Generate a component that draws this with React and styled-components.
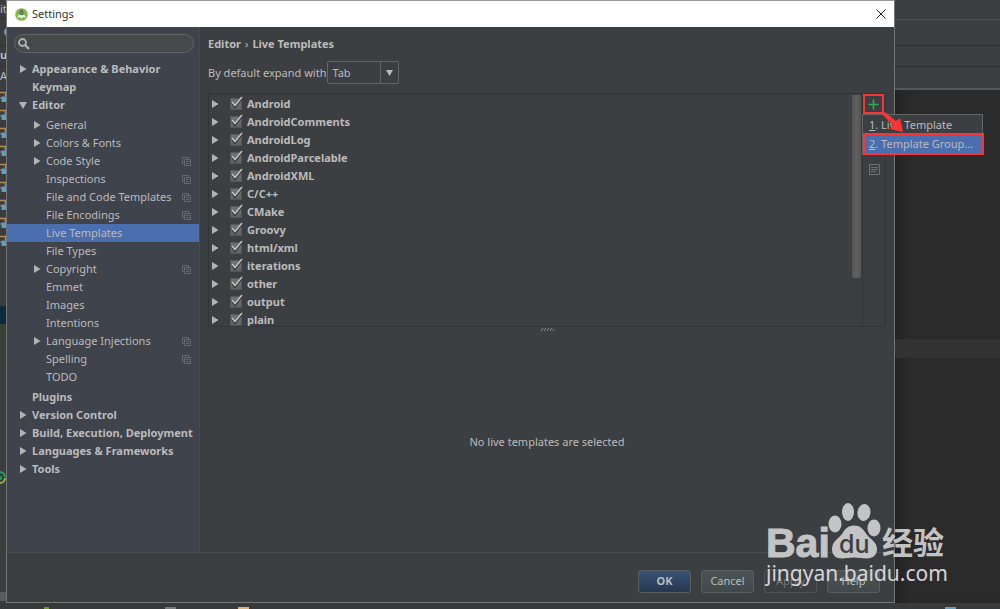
import React, { Component } from "react";
import styled, { createGlobalStyle } from "styled-components";

const GlobalStyle = createGlobalStyle`
  * {
    box-sizing: border-box;
  }

  body {
    margin: 0;
    background: #3c3f41;
    color: #bbbbbb;
    font-family: "Noto Sans", "Noto Sans CJK SC", sans-serif;
    font-size: 11px;
    line-height: 18px;
  }

  button, input, select {
    font: inherit;
    color: inherit;
  }
`;

const Screen = styled.div`
  position: relative;
  min-height: 100vh;
  display: flex;
  flex-direction: column;
  overflow: hidden;
`;

const Desktop = styled.div`
  flex: 1;
  display: flex;
`;

const ProjectStrip = styled.div`
  width: 6px;
  overflow: hidden;
  background: #3a3c3e;
  white-space: nowrap;
`;

const StripCell = styled.div`
  height: ${props => props.$height}px;
  background: ${props => props.$bg || "transparent"};
  border-bottom: ${props => (props.$line ? "1px solid #2f3133" : "none")};
  font-weight: ${props => (props.$bold ? "bold" : "normal")};

  > svg {
    display: block;
  }
`;

const EditorStrip = styled.div`
  width: 105px;
  background: #2b2b2b;
  box-shadow: inset 12px 0 12px -8px #1e1e1e;
`;

const EditorBar = styled.div`
  height: ${props => props.$height}px;
  background: #3c3f41;
  border-bottom: ${props => props.$line};
`;

const CaretRow = styled.div`
  height: 19px;
  margin-top: 249px;
  background: #323232;
`;

const StatusBar = styled.div`
  height: 6px;
  padding: 4px 44px 0;
  display: flex;
  overflow: hidden;
  background: #38393b;
`;

const StatusChip = styled.span`
  width: ${props => props.$width}px;
  height: 2px;
  margin-left: ${props => (props.$end ? "auto" : "0")};
  background: ${props => props.$color || "transparent"};
`;

const Dialog = styled.div`
  flex: 1;
  display: flex;
  flex-direction: column;
  border: 1px solid #747676;
  border-top-color: #999;
  background: #3c3f41;
`;

const TitleBar = styled.header`
  height: 26px;
  padding: 0 8px;
  display: flex;
  align-items: center;
  gap: 4px;
  background: #fff;
  color: #333;

  > span {
    flex: 1;
  }
`;

const IconButton = styled.button`
  padding: 0;
  border: 0;
  background: transparent;
  display: flex;
  justify-content: center;
  cursor: pointer;
`;

const Body = styled.div`
  flex: 1;
  display: flex;
  border-bottom: 1px solid #4b4d4e;
`;

const Sidebar = styled.nav`
  width: 193px;
  padding-top: 7px;
  background: #3f434c;
  border-right: 1px solid #484b4d;
`;

const SearchBox = styled.label`
  height: 19px;
  margin: 0 5px 7px 7px;
  padding: 0 3px;
  display: flex;
  align-items: center;
  gap: 4px;
  border: 1px solid #606464;
  border-radius: 10px;
  background: #45494a;

  > input {
    flex: 1;
    min-width: 0;
    height: 16px;
    padding: 0;
    border: 0;
    outline: 0;
    background: transparent;
  }
`;

const Tree = styled.ul`
  margin: 0;
  padding: 0;
  list-style: none;
`;

const SubTree = styled(Tree)`
  padding: 2px 0;
`;

const TreeRow = styled.button`
  width: 100%;
  height: 18px;
  padding: 0 8px 0 ${props => (props.$child ? "26px" : "12px")};
  display: flex;
  align-items: center;
  gap: 4px;
  border: 0;
  background: ${props => (props.$selected ? "#4b6eaf" : "transparent")};
  font-weight: ${props => (props.$child ? "normal" : "bold")};
  line-height: 18px;
  text-align: left;
  white-space: nowrap;
  cursor: pointer;

  > span {
    flex: 1;
  }
`;

const ArrowSlot = styled.i`
  flex: none;
  width: 9px;
  display: flex;
  justify-content: center;
`;

const Content = styled.main`
  flex: 1;
  min-width: 0;
  padding: 8px 8px 0;
  display: flex;
  flex-direction: column;
`;

const Breadcrumb = styled.h1`
  margin: 0;
  display: flex;
  gap: 4px;
  font-size: 11px;
  line-height: 18px;

  > i {
    font-style: normal;
    font-weight: normal;
  }
`;

const ExpandRow = styled.div`
  margin: 8px 0 9px;
  display: flex;
  align-items: center;
  gap: 1px;
`;

const SelectBox = styled.div`
  position: relative;

  > select {
    display: block;
    width: 72px;
    height: 23px;
    padding: 0 4px;
    border: 1px solid #646464;
    border-radius: 2px;
    background: transparent;
    appearance: none;
  }

  > svg {
    position: absolute;
    top: 0;
    right: 0;
    pointer-events: none;
  }
`;

const TemplatePanel = styled.section`
  height: 234px;
  display: flex;
  border: 1px solid #323435;
`;

const TemplateList = styled.ul`
  flex: 1;
  margin: 0;
  padding: 1px 0 0;
  overflow: hidden;
  list-style: none;
`;

const TemplateRow = styled.li`
  height: 18px;
  padding-left: 2px;
  display: flex;
  align-items: center;
  gap: 10px;
  font-weight: bold;
`;

const CheckLabel = styled.label`
  position: relative;
  display: flex;
  align-items: center;
  gap: 5px;

  > input {
    width: 12px;
    height: 12px;
    margin: 0;
    border: 1px solid #555;
    background: linear-gradient(#717171, #626262);
    appearance: none;
  }

  > svg {
    position: absolute;
    left: 0;
    top: 1px;
    visibility: hidden;
    pointer-events: none;
  }

  > input:checked + svg {
    visibility: visible;
  }
`;

const ScrollTrack = styled.div`
  width: 10px;
  padding-top: 1px;
`;

const ScrollThumb = styled.div`
  width: 9px;
  height: 183px;
  border-radius: 2px;
  background: linear-gradient(90deg, #555, #606060, #555);
`;

const Toolbar = styled.div`
  width: 23px;
  display: flex;
  flex-direction: column;
  gap: 50px;
  border-left: 1px solid #323435;
`;

const AddAction = styled.div`
  position: relative;
  height: 20px;
`;

const AddButton = styled(IconButton)`
  width: 21px;
  height: 20px;
  align-items: center;
  border: 2px solid #fa3434;
`;

const PopupMenu = styled.div`
  position: absolute;
  z-index: 1;
  top: 20px;
  left: -1px;
  width: 121px;
  padding: 1px 0 1px 2px;
  border: 1px solid #626566;
  background: #3c3f41;
`;

const MenuItem = styled.button`
  display: block;
  width: 100%;
  height: 18px;
  padding: 0 4px;
  border: 0;
  background: ${props => (props.$selected ? "#4b6eaf" : "transparent")};
  outline: ${props => (props.$selected ? "2px solid #fa3434" : "none")};
  line-height: 18px;
  text-align: left;
  white-space: nowrap;

  & + & {
    margin-top: 1px;
  }
`;

const Pointer = styled.svg`
  position: absolute;
  z-index: 2;
  top: 16px;
  left: 18px;
`;

const Splitter = styled.div`
  height: 5px;
  display: flex;
  justify-content: center;
`;

const EmptyState = styled.div`
  flex: 1;
  display: flex;
  align-items: center;
  justify-content: center;
`;

const Footer = styled.footer`
  height: 49px;
  padding: 7px 14px 0;
  display: flex;
  align-items: center;
  justify-content: flex-end;
  gap: 10px;
`;

const Button = styled.button`
  width: 53px;
  height: 23px;
  padding: 0;
  border: 1px solid ${props => (props.disabled ? "#505354" : "#5a5e60")};
  border-radius: 3px;
  background: linear-gradient(#4c5355, #42494b);
  line-height: 20px;

  &:disabled {
    background: transparent;
    color: #777;
  }
`;

const PrimaryButton = styled(Button)`
  background: linear-gradient(#365378, #263850);
  font-weight: bold;
`;

const Watermark = styled.svg`
  position: absolute;
  right: 52px;
  bottom: 15px;
  opacity: 0.92;
  pointer-events: none;
`;

const settings = [
  { name: "Appearance & Behavior", arrow: "right" },
  { name: "Keymap" },
  {
    name: "Editor",
    arrow: "down",
    children: [
      { name: "General", arrow: "right" },
      { name: "Colors & Fonts", arrow: "right" },
      { name: "Code Style", arrow: "right", project: true },
      { name: "Inspections", project: true },
      { name: "File and Code Templates", project: true },
      { name: "File Encodings", project: true },
      { name: "Live Templates" },
      { name: "File Types" },
      { name: "Copyright", arrow: "right", project: true },
      { name: "Emmet" },
      { name: "Images" },
      { name: "Intentions" },
      { name: "Language Injections", arrow: "right", project: true },
      { name: "Spelling", project: true },
      { name: "TODO" }
    ]
  },
  { name: "Plugins" },
  { name: "Version Control", arrow: "right" },
  { name: "Build, Execution, Deployment", arrow: "right" },
  { name: "Languages & Frameworks", arrow: "right" },
  { name: "Tools", arrow: "right" }
];

const groups = [
  "Android",
  "AndroidComments",
  "AndroidLog",
  "AndroidParcelable",
  "AndroidXML",
  "C/C++",
  "CMake",
  "Groovy",
  "html/xml",
  "iterations",
  "other",
  "output",
  "plain"
];

function Arrow({ down }) {
  return (
    <svg width="9" height="8" viewBox="0 0 9 8" fill="#b4b4b4">
      <path d={down ? "M0 1h8L4 8z" : "M1 0v8l6.500-4z"} />
    </svg>
  );
}

function ProjectIcon() {
  return (
    <svg width="9" height="9" viewBox="0 0 9 9" fill="none" stroke="#656970">
      <path d="M2.5 6.5h-2v-6h6v2" />
      <path d="M2.5 2.5h6v6h-6zM4 4.5h3M4 6.5h3" />
    </svg>
  );
}

function Check() {
  return (
    <svg width="14" height="14" viewBox="0 0 14 14" fill="none">
      <path d="M2 7l3 4 7-9" stroke="#333" strokeWidth="2" />
      <path d="M2 6l3 3.5L12 1" stroke="#c0c0c0" strokeWidth="1.6" />
    </svg>
  );
}

function StudioIcon() {
  return (
    <svg width="13" height="13" viewBox="0 0 13 13">
      <circle cx="6.5" cy="6.5" r="6.3" fill="#80b94b" />
      <path d="M2.5 10a4 4 0 0 1 8 0l-2-1-2 1.5-2-1.5z" fill="#e6efd9" />
      <path d="M6.5 1.5v4" stroke="#596b56" strokeWidth="2" />
      <circle cx="6.5" cy="5" r="2.2" fill="#596b56" />
      <circle cx="6.500" cy="5" r="0.800" fill="#a9c98e" />
    </svg>
  );
}

function FieldIcon() {
  return (
    <svg width="6" height="18" viewBox="0 0 6 18">
      <path d="M0 1.5h5.5v4" fill="none" stroke="#b98a50" strokeWidth="1.5" />
      <path d="M0 7h2" stroke="#b98a50" />
      <path d="M1.5 5.5H6V11H1.5z" fill="#5f9fc4" />
    </svg>
  );
}

function BaiduMark() {
  return (
    <Watermark width="184" height="94" viewBox="0 0 184 94" fill="#cfd0d0">
      <text
        x="2"
        y="57"
        fontFamily="Liberation Sans, sans-serif"
        fontSize="41"
        fontWeight="bold"
        stroke="#cfd0d0"
      >
        Bai
      </text>
      <ellipse cx="71" cy="24" rx="6.5" ry="8.5" />
      <ellipse cx="84" cy="12" rx="6" ry="9" />
      <ellipse cx="100" cy="12.5" rx="6.5" ry="8.5" transform="rotate(8 100 12)" />
      <ellipse cx="110" cy="28" rx="6.5" ry="8.5" />
      <path d="M90 25.500c6 0 9 3.500 12 8 4 6 11 8 11 15.500 0 6-4 9.500-10 9.500-5 0-8-1-13-1s-8 1-12 1c-6 0-10-3-10-9.500 0-7.500 6-10 10-15 3-5 6-8.500 12-8.500z" />
      <text x="75" y="53" fill="#3c3f41" fontFamily="Inter, sans-serif" fontSize="25" fontWeight="500">
        du
      </text>
      <text x="118" y="54" fontFamily="Noto Sans CJK SC, sans-serif" fontSize="31" fontWeight="bold">
        经验
      </text>
      <text x="2" y="81" fill="#e2e2e4" fontFamily="Noto Sans, sans-serif" fontSize="21">
        jingyan.baidu.com
      </text>
    </Watermark>
  );
}

export default class App extends Component {
  constructor(props) {
    super(props);

    this.state = {
      page: "Live Templates",
      unchecked: []
    };
  }

  toggle(name) {
    const { unchecked } = this.state;
    this.setState({
      unchecked: unchecked.includes(name)
        ? unchecked.filter(item => item !== name)
        : unchecked.concat(name)
    });
  }

  renderRow(item, child) {
    return (
      <TreeRow
        type="button"
        $child={child}
        $selected={item.name === this.state.page}
        onClick={() => this.setState({ page: item.name })}
      >
        <ArrowSlot>
          {item.arrow && <Arrow down={item.arrow === "down"} />}
        </ArrowSlot>
        <span>{item.name}</span>
        {item.project && <ProjectIcon />}
      </TreeRow>
    );
  }

  render() {
    const tree = settings.map(item => (
      <li key={item.name}>
        {this.renderRow(item, false)}
        {item.children && (
          <SubTree>
            {item.children.map(sub => (
              <li key={sub.name}>{this.renderRow(sub, true)}</li>
            ))}
          </SubTree>
        )}
      </li>
    ));

    const rows = groups.map(name => (
      <TemplateRow key={name}>
        <Arrow />
        <CheckLabel>
          <input
            type="checkbox"
            checked={!this.state.unchecked.includes(name)}
            onChange={() => this.toggle(name)}
          />
          <Check />
          {name}
        </CheckLabel>
      </TemplateRow>
    ));

    return (
      <Screen>
        <GlobalStyle />
        <Desktop>
          <ProjectStrip>
            <StripCell $height={19} $line>it</StripCell>
            <StripCell $height={27} $line>
              <svg width="6" height="26">
                <circle cx="8" cy="13" r="4" fill="#5f9fc4" />
              </svg>
            </StripCell>
            <StripCell $height={21} $line $bold>u</StripCell>
            <StripCell $height={24} $line>A</StripCell>
            {[1, 2, 3, 4, 5, 6, 7, 8, 9].map(n => (
              <StripCell key={n} $height={18}>
                <FieldIcon />
              </StripCell>
            ))}
            <StripCell $height={53} />
            <StripCell $height={18} $bg="#0d293e" />
            <StripCell $height={36} $bg="#344134" />
            <StripCell $height={110} />
            <StripCell $height={122}>
              <svg width="6" height="16" fill="none" strokeWidth="2">
                <path d="M-5 7a5 5 0 0 1 10 0" stroke="#20a464" />
                <path d="M5 8a5 5 0 0 1-10 0" stroke="#8bb83d" />
                <circle cx="0" cy="8" r="2" fill="#20a464" />
              </svg>
            </StripCell>
            <StripCell $height={9} $bg="#5a5c5d" />
          </ProjectStrip>

          <Dialog role="dialog" aria-label="Settings">
            <TitleBar>
              <StudioIcon />
              <span>Settings</span>
              <IconButton type="button" aria-label="Close">
                <svg width="10" height="10" viewBox="0 0 10 10" stroke="#222">
                  <path d="M0.5 0.5l9 9M9.5 0.5l-9 9" />
                </svg>
              </IconButton>
            </TitleBar>

            <Body>
              <Sidebar>
                <SearchBox>
                  <svg width="12" height="12" viewBox="0 0 12 12" fill="none" stroke="#afb1b3">
                    <circle cx="4.5" cy="4.5" r="3.5" strokeWidth="1.8" />
                    <path d="M7 7l4 4" strokeWidth="2.4" />
                  </svg>
                  <input type="text" aria-label="Search" />
                </SearchBox>
                <Tree>{tree}</Tree>
              </Sidebar>

              <Content>
                <Breadcrumb>
                  <span>Editor</span>
                  <i>›</i>
                  <span>Live Templates</span>
                </Breadcrumb>
                <ExpandRow>
                  <label htmlFor="expand">By default expand with</label>
                  <SelectBox>
                    <select id="expand" defaultValue="Tab">
                      <option>Tab</option>
                    </select>
                    <svg width="19" height="23" viewBox="0 0 19 23">
                      <path d="M0.5 1v21" stroke="#646464" />
                      <path d="M6 9h7l-3.5 6z" fill="#bbb" />
                    </svg>
                  </SelectBox>
                </ExpandRow>

                <TemplatePanel>
                  <TemplateList>{rows}</TemplateList>
                  <ScrollTrack>
                    <ScrollThumb />
                  </ScrollTrack>
                  <Toolbar>
                    <AddAction>
                      <AddButton type="button" aria-label="Add">
                        <svg width="11" height="11" viewBox="0 0 11 11">
                          <path d="M5.5 0.5v10M0.5 5.5h10" stroke="#2fae55" strokeWidth="1.5" />
                        </svg>
                      </AddButton>
                      <PopupMenu role="menu">
                        <MenuItem type="button" role="menuitem">
                          <u>1</u>. Live Template
                        </MenuItem>
                        <MenuItem type="button" role="menuitem" $selected>
                          <u>2</u>. Template Group...
                        </MenuItem>
                      </PopupMenu>
                      <Pointer width="24" height="24" viewBox="0 0 24 24" fill="#fa3434">
                        <path d="M1 4l3-2 11 9 4-3 3 14-13-3 3-4z" />
                      </Pointer>
                    </AddAction>
                    <IconButton type="button" aria-label="Restore defaults">
                      <svg width="11" height="11" viewBox="0 0 11 11" fill="none" stroke="#6e7071">
                        <path d="M0.5 0.5h10v10h-10zM2 3.5h7M2 5.5h7M2 7.5h5" />
                      </svg>
                    </IconButton>
                  </Toolbar>
                </TemplatePanel>
                <Splitter>
                  <svg width="13" height="5" viewBox="0 0 13 5" stroke="#8a8c8d">
                    <path d="M0 4l2-3M3 4l2-3M6 4l2-3M9 4l2-3M12 4l1-2" />
                  </svg>
                </Splitter>
                <EmptyState>No live templates are selected</EmptyState>
              </Content>
            </Body>

            <Footer>
              <PrimaryButton type="button">OK</PrimaryButton>
              <Button type="button">Cancel</Button>
              <Button type="button" disabled>Apply</Button>
              <Button type="button">Help</Button>
            </Footer>
          </Dialog>

          <EditorStrip>
            <EditorBar $height={20} $line="1px solid #515354" />
            <EditorBar $height={26} $line="1px solid #2f3133" />
            <EditorBar $height={21} $line="1px solid #2b2d2e" />
            <EditorBar $height={23} $line="2px solid #555758" />
            <CaretRow />
          </EditorStrip>
        </Desktop>
        <StatusBar>
          <StatusChip $width={5} $color="#6f9a1e" />
          <StatusChip $width={116} />
          <StatusChip $width={11} $color="#7a7a7a" />
          <StatusChip $width={62} />
          <StatusChip $width={11} $color="#e0b27a" />
          <StatusChip $width={11} $color="#5f9fc4" $end />
        </StatusBar>
        <BaiduMark />
      </Screen>
    );
  }
}
